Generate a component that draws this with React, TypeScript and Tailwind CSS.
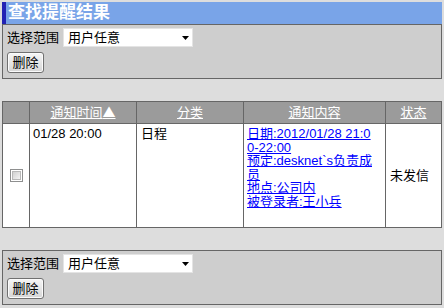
import React from "react";

const FONT = { fontFamily: '"Liberation Sans", "Noto Sans CJK SC", sans-serif' };

function Arrow() {
  return (
    <svg width="7" height="4" viewBox="0 0 7 4" className="block">
      <path d="M0 0 H7 L3.5 4 Z" fill="#000" />
    </svg>
  );
}

function Panel() {
  return (
    <div className="h-[55px] border border-[#666666] bg-[#cecece] pl-[4px] pt-[3px]">
      <div className="flex items-center gap-[4px] h-[19px]">
        <span className="text-[13px] leading-[19px] text-black">选择范围</span>
        <div className="w-[130px] h-[19px] bg-white border border-[#e4e4e4] flex items-center justify-between pl-[4px] pr-[3px]">
          <span className="text-[13px] leading-[17px] text-black">用户任意</span>
          <Arrow />
        </div>
      </div>
      <div className="mt-[5px] w-[37px] h-[21px] rounded-[3px] border border-[#707070] bg-gradient-to-b from-[#f6f6f6] to-[#d6d6d6] flex items-center justify-center text-[13px] leading-[13px] text-black shadow-[inset_0_0_0_1px_#fbfbfb]">
        删除
      </div>
    </div>
  );
}

function Checkbox() {
  return (
    <div className="w-[13px] h-[13px] border border-[#8e8f8f] bg-white p-[1px]">
      <div className="w-full h-full border border-[#b8b8b8] bg-gradient-to-br from-[#d0d0d0] to-[#f4f4f4]" />
    </div>
  );
}

export default function App() {
  return (
    <div
      className="w-[444px] h-[308px] bg-[#dddddd] px-[2px] pt-[2px] overflow-hidden"
      style={FONT}
    >
      <div className="h-[22px] flex bg-[#79a4e8]">
        <div className="w-[4px] bg-[#2222b4]" />
        <span className="ml-[2px] text-white font-bold text-[17px] leading-[22px]">
          查找提醒结果
        </span>
      </div>
      <Panel />

      <div className="mt-[22px] border border-[#666666] bg-[#666666] grid grid-cols-[26px_106px_106px_141px_55px] grid-rows-[21px_103px] gap-px text-[13px]">
        <div className="bg-[#9b9b9b]" />
        <div className="bg-[#9b9b9b] flex items-center justify-center">
          <span className="text-white underline">
            通知时间<span className="font-['Noto_Sans_CJK_SC']">▲</span>
          </span>
        </div>
        <div className="bg-[#9b9b9b] flex items-center justify-center">
          <span className="text-white underline">分类</span>
        </div>
        <div className="bg-[#9b9b9b] flex items-center justify-center">
          <span className="text-white underline">通知内容</span>
        </div>
        <div className="bg-[#9b9b9b] flex items-center justify-center">
          <span className="text-white underline">状态</span>
        </div>

        <div className="bg-white flex items-center justify-center">
          <Checkbox />
        </div>
        <div className="bg-white px-[3px] pt-[3px] leading-[13.5px] text-black">
          01/28 20:00
        </div>
        <div className="bg-white px-[4px] pt-[3px] leading-[13.5px] text-black">
          日程
        </div>
        <div className="bg-white px-[3px] pt-[3px] leading-[13.5px] whitespace-nowrap">
          <a className="text-[#0000ff] underline" href="#">
            日期:2012/01/28 21:0
            <br />
            0-22:00
          </a>
          <br />
          <a className="text-[#0000ff] underline" href="#">
            预定:desknet`s负责成
            <br />
            员
          </a>
          <br />
          <a className="text-[#0000ff] underline" href="#">
            地点:公司内
          </a>
          <br />
          <a className="text-[#0000ff] underline" href="#">
            被登录者:王小兵
          </a>
        </div>
        <div className="bg-white px-[4px] flex items-center text-black">未发信</div>
      </div>

      <div className="mt-[22px]">
        <Panel />
      </div>
    </div>
  );
}
